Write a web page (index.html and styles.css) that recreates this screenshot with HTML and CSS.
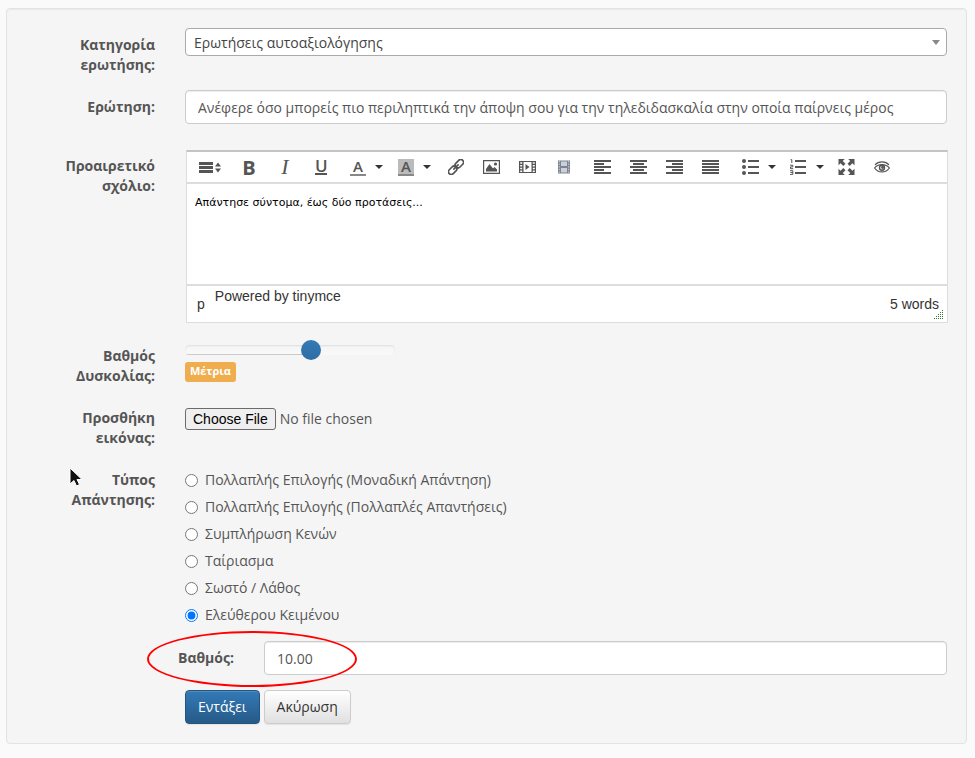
FILE: index.html
```
<!DOCTYPE html>
<html lang="el">
<head>
    <meta charset="UTF-8">
    <title>Ερώτηση</title>
    <link rel="stylesheet" href="styles.css">
</head>
<body>
    <form class="well">
        <!-- κατηγορία -->
        <div class="row">
            <label class="name" for="category">Κατηγορία ερωτήσης:</label>
            <div class="select">
                <select id="category">
                    <option>Ερωτήσεις αυτοαξιολόγησης</option>
                </select>
            </div>
        </div>
        <!-- ερώτηση -->
        <div class="row row-question">
            <label class="name" for="question">Ερώτηση:</label>
            <input class="control" id="question" type="text" value="Ανέφερε όσο μπορείς πιο περιληπτικά την άποψη σου για την τηλεδιδασκαλία στην οποία παίρνεις μέρος">
        </div>
        <!-- σχόλιο -->
        <div class="row">
            <label class="name" for="comment">Προαιρετικό σχόλιο:</label>
            <div class="editor">
                <div class="toolbar">
                    <div class="group">
                        <button type="button" aria-label="Toolbar"><svg width="22" height="16" viewBox="0 0 22 16"><path d="M0 3h14v3H0zM0 7h14v3H0zM0 11h14v3H0zM16 7.500h6l-3-4zM16 9.500h6l-3 4z"/></svg></button>
                    </div>
                    <div class="group">
                        <button type="button" class="bold">B</button>
                        <button type="button" class="italic">I</button>
                        <button type="button" class="underline"><span>U</span></button>
                        <button type="button" class="split"><span class="color">A</span><i class="caret"></i></button>
                        <button type="button" class="split"><span class="color back">A</span><i class="caret"></i></button>
                    </div>
                    <div class="group">
                        <button type="button" aria-label="Link"><svg width="16" height="16" viewBox="0 0 16 16"><g fill="none" stroke="#555" stroke-width="1.700" stroke-linecap="round" transform="rotate(-45 8 8)"><rect x="-1.500" y="5.200" width="9.500" height="5.600" rx="2.800"/><rect x="8" y="5.200" width="9.500" height="5.600" rx="2.800"/><path d="M5 8h6"/></g></svg></button>
                        <button type="button" aria-label="Image"><svg width="18" height="14" viewBox="0 0 18 14"><path fill-rule="evenodd" d="M0 0h17v14H0zM1.200 1.200v11.600h14.600V1.200z"/><path d="M3 11.500V9l3.500-5L10 8.500l1.500-1.500 2.500 2.500v2z"/><circle cx="12.500" cy="4" r="1.600"/></svg></button>
                        <button type="button" aria-label="Video"><svg width="18" height="14" viewBox="0 0 18 14"><path fill-rule="evenodd" d="M0 1h17v12H0zM4.500 2v10h8V2zM1.200 2.200v1.600h2V2.200zM1.200 5v1.600h2V5zM1.200 7.700v1.600h2V7.700zM1.200 10.400V12h2v-1.600zM13.800 2.200v1.600h2V2.200zM13.800 5v1.600h2V5zM13.800 7.700v1.600h2V7.700zM13.800 10.400V12h2v-1.600z"/><path d="M6.500 4v6l4-3z"/></svg></button>
                        <button type="button" aria-label="Media"><svg width="12" height="14" viewBox="0 0 12 14"><path fill="#7d8390" d="M0 .5h12v13H0z"/><path fill="#ccd1d9" d="M3 1.500h6v4.500H3zM3 8h6v4.500H3z"/><path stroke="#d5d9e0" stroke-dasharray="1.300 1.300" d="M1.300 1v13M10.700 1v13"/></svg></button>
                    </div>
                    <div class="group">
                        <button type="button" aria-label="Left"><svg width="18" height="14" viewBox="0 0 18 14"><path d="M0 0h17v2H0zM0 3h10v2H0zM0 6h17v2H0zM0 9h10v2H0zM0 12h17v2H0z"/></svg></button>
                        <button type="button" aria-label="Center"><svg width="18" height="14" viewBox="0 0 18 14"><path d="M0 0h17v2H0zM3 3h11v2H3zM0 6h17v2H0zM3 9h11v2H3zM0 12h17v2H0z"/></svg></button>
                        <button type="button" aria-label="Right"><svg width="18" height="14" viewBox="0 0 18 14"><path d="M0 0h17v2H0zM6 3h11v2H6zM0 6h17v2H0zM6 9h11v2H6zM0 12h17v2H0z"/></svg></button>
                        <button type="button" aria-label="Justify"><svg width="18" height="14" viewBox="0 0 18 14"><path d="M0 0h17v2H0zM0 3h17v2H0zM0 6h17v2H0zM0 9h17v2H0zM0 12h17v2H0z"/></svg></button>
                    </div>
                    <div class="group">
                        <button type="button" class="split" aria-label="Bullets"><svg width="17" height="16" viewBox="0 0 17 16"><circle cx="2" cy="2" r="2"/><circle cx="2" cy="8" r="2"/><circle cx="2" cy="14" r="2"/><path d="M6 1h11v2H6zM6 7h11v2H6zM6 13h11v2H6z"/></svg><i class="caret"></i></button>
                        <button type="button" class="split" aria-label="Numbers"><svg width="17" height="16" viewBox="0 0 17 16"><path d="M5 1h11v2H5zM5 7h11v2H5zM5 13h11v2H5z"/><path fill="none" stroke="#555" d="M.5.700h1.300V4M0 6.200h2.800v1.700H.5v1.800h2.800M0 11.700h2.800v3.700H0M.5 13.500h2.300"/></svg><i class="caret"></i></button>
                        <button type="button" aria-label="Fullscreen"><svg width="17" height="16" viewBox="0 0 16 16"><path d="M0 0h6.300L4.200 2.100 7 4.800 4.800 7 2.100 4.200 0 6.300zM16 0v6.300l-2.100-2.100L11.200 7 9 4.800l2.700-2.700L9.700 0zM16 16H9.700l2.100-2.100L9 11.200 11.200 9l2.700 2.700L16 9.700zM0 16V9.700l2.100 2.100L4.800 9 7 11.200l-2.700 2.700L6.300 16z"/></svg></button>
                        <button type="button" aria-label="Preview"><svg width="16" height="12" viewBox="0 0 16 12"><path fill="none" stroke="#555" stroke-width="1.200" d="M.6 7C4 2.500 12 2.500 15.400 7 12 12.200 4 12.200.6 7zM1 3.800C4.500-.2 11.500-.2 15 3.800"/><circle cx="8" cy="6.700" r="2.500" fill="none" stroke="#555" stroke-width="1.400"/><circle cx="8.500" cy="6.500" r="1.400"/></svg></button>
                    </div>
                </div>
                <textarea id="comment">Απάντησε σύντομα, έως δύο προτάσεις...</textarea>
                <div class="status">
                    <span class="path">p</span>
                    <span class="powered">Powered by tinymce</span>
                    <span class="words">5 words</span>
                    <svg class="grip" width="10" height="10" viewBox="0 0 10 10"><path stroke="#3c7a30" stroke-dasharray="1 1" d="M8 .5h2M6 2.500h4M4 4.500h6M2 6.500h8M0 8.500h10"/></svg>
                </div>
            </div>
        </div>
        <!-- δυσκολία -->
        <div class="row">
            <label class="name" for="level">Βαθμός Δυσκολίας:</label>
            <div class="level">
                <input id="level" type="range" min="0" max="100" value="61">
                <span class="badge">Μέτρια</span>
            </div>
        </div>
        <!-- εικόνα -->
        <div class="row">
            <label class="name" for="picture">Προσθήκη εικόνας:</label>
            <input class="file" id="picture" type="file">
        </div>
        <!-- τύπος απάντησης -->
        <div class="row row-type" role="radiogroup" aria-labelledby="type">
            <span class="name" id="type">Τύπος Απάντησης:</span>
            <div class="radios">
                <label><input type="radio" name="answer">Πολλαπλής Επιλογής (Μοναδική Απάντηση)</label>
                <label><input type="radio" name="answer">Πολλαπλής Επιλογής (Πολλαπλές Απαντήσεις)</label>
                <label><input type="radio" name="answer">Συμπλήρωση Κενών</label>
                <label><input type="radio" name="answer">Ταίριασμα</label>
                <label><input type="radio" name="answer">Σωστό / Λάθος</label>
                <label><input type="radio" name="answer" checked>Ελεύθερου Κειμένου</label>
            </div>
            <svg class="pointer" width="14" height="22" viewBox="0 0 14 22"><path fill="#111" stroke="#fff" d="M1 1v16l4-3.500L7.500 19l3-1.500L8 12.500h5z"/></svg>
        </div>
        <!-- βαθμός -->
        <div class="row row-grade">
            <label class="name" for="grade">Βαθμός:</label>
            <input class="control" id="grade" type="text" value="10.00">
            <div class="mark"></div>
        </div>
        <div class="buttons">
            <button type="submit" class="btn btn-primary">Εντάξει</button>
            <button type="button" class="btn">Ακύρωση</button>
        </div>
    </form>
</body>
</html>
```
FILE: styles.css
```
*{box-sizing:border-box;}
body{margin:0;padding:8px 8px 14px 6px;background-color:#fafafa;color:#555;
    font-family:"Open Sans","Noto Sans",sans-serif;
    font-size:14px;
    line-height:20px;
}
input,select,textarea,button{font:inherit;color:inherit;margin:0;}
.well{padding:19px;border:1px solid #e3e3e3;border-radius:4px;background-color:#f5f5f5;
    box-shadow:inset 0 1px 1px rgba(0,0,0,.05);
}
.row{display:grid;grid-template-columns:129px 1fr;column-gap:30px;align-items:start;margin-bottom:15px;position:relative;}
.row-question{margin-bottom:25px;}
.row-type{margin-bottom:16px;}
.name{padding-top:7px;padding-left:24px;text-align:right;font-weight:bold;}
.control{width:100%;height:34px;padding:6px 12px;border:1px solid #ccc;border-radius:4px;background-color:#fff;
    box-shadow:inset 0 1px 1px rgba(0,0,0,.075);
}
/* λίστα */
.select{position:relative;}
.select select{display:block;width:100%;height:28px;padding:2px 20px 0 8px;border:1px solid #aaa;border-radius:4px;
    background-color:#fff;color:#444;appearance:none;
}
.select::after{content:"";position:absolute;right:7px;top:12px;
    border:solid transparent;border-width:5px 4px 0;border-top-color:#888;
}
/* editor */
.editor{border:1px solid #ddd;border-top:2px solid #c4c4c4;margin:1px -1px 1px 1px;background-color:#fff;}
.toolbar{display:flex;flex-wrap:wrap;gap:3px;height:32px;padding:0 5px;border-bottom:2px solid #ddd;}
.group{display:flex;}
.group button{display:flex;align-items:center;justify-content:center;width:36px;height:30px;padding:0;border:0;background:none;}
.group .split{width:48px;gap:9px;justify-content:flex-end;padding-right:4px;}
.group svg{fill:#555;}
.caret{border:solid transparent;border-width:4px 4px 0;border-top-color:#333;}
.group .bold{font:bold 20px "Open Sans",sans-serif;}
.group .italic{font:italic 22px "Liberation Serif",serif;}
.underline span{width:12px;border-bottom:2px solid #555;font-size:17px;font-weight:600;line-height:14px;}
.color{width:16px;border-bottom:2px solid #888;font-size:15px;font-weight:600;line-height:15px;}
.back{background-color:#bbb;}
.editor textarea{display:block;width:100%;height:100px;padding:10px 8px;border:0;resize:none;outline:0;color:#000;
    font:11px/18px "DejaVu Sans",sans-serif;
}
.status{display:flex;height:38px;padding:0 8px 0 10px;border-top:2px solid #ddd;position:relative;
    font-family:"Liberation Sans",Arial,sans-serif;color:#333;
}
.path{padding-top:8px;margin-right:10px;}
.words{margin-left:auto;padding-top:8px;}
.grip{position:absolute;right:3px;bottom:2px;}
/* δυσκολία */
.level{display:flex;flex-direction:column;align-items:flex-start;}
.level input{width:210px;height:20px;margin:1px 0 2px;background:none;appearance:none;}
.level input::-webkit-slider-runnable-track{height:10px;border-radius:4px;
    background:linear-gradient(#ccc,#ccc) 0 100%/60% 1px no-repeat,linear-gradient(#f5f5f5,#f9f9f9);
    box-shadow:inset 0 1px 2px rgba(0,0,0,.1);
}
.level input::-webkit-slider-thumb{appearance:none;width:20px;height:20px;margin-top:-5px;border-radius:50%;
    background:linear-gradient(#337ab7,#2e6da4);
}
.badge{height:20px;padding:0 5px;border-radius:3px;background-color:#f0ad4e;color:#fff;font-size:11px;font-weight:bold;line-height:18px;}
.file{margin-top:7px;height:22px;width:100%;}
.file::file-selector-button{height:22px;padding:1px 7px;margin-right:4px;border:1px solid #6b6b6b;border-radius:3px;background-color:#efefef;color:#000;
    font:14px "Liberation Sans",Arial,sans-serif;
}
/* απαντήσεις */
.radios label{display:flex;align-items:center;height:27px;padding-top:7px;}
.radios input{width:13px;height:13px;margin-right:7px;}
.pointer{position:absolute;left:43px;top:4px;}
.row-grade{grid-template-columns:208px 1fr;}
.mark{position:absolute;left:121px;top:-10px;width:210px;height:56px;border:2px solid #f00;border-radius:50%;pointer-events:none;}
.buttons{display:flex;gap:4px;padding-left:159px;}
.btn{height:34px;padding:6px 12px;border:1px solid #ccc;border-radius:4px;color:#333;
    background:linear-gradient(#fff,#e0e0e0);
    box-shadow:inset 0 1px 0 rgba(255,255,255,.15),0 1px 1px rgba(0,0,0,.075);
}
.btn-primary{border-color:#245580;background:linear-gradient(#337ab7,#265a88);color:#fff;}
```
